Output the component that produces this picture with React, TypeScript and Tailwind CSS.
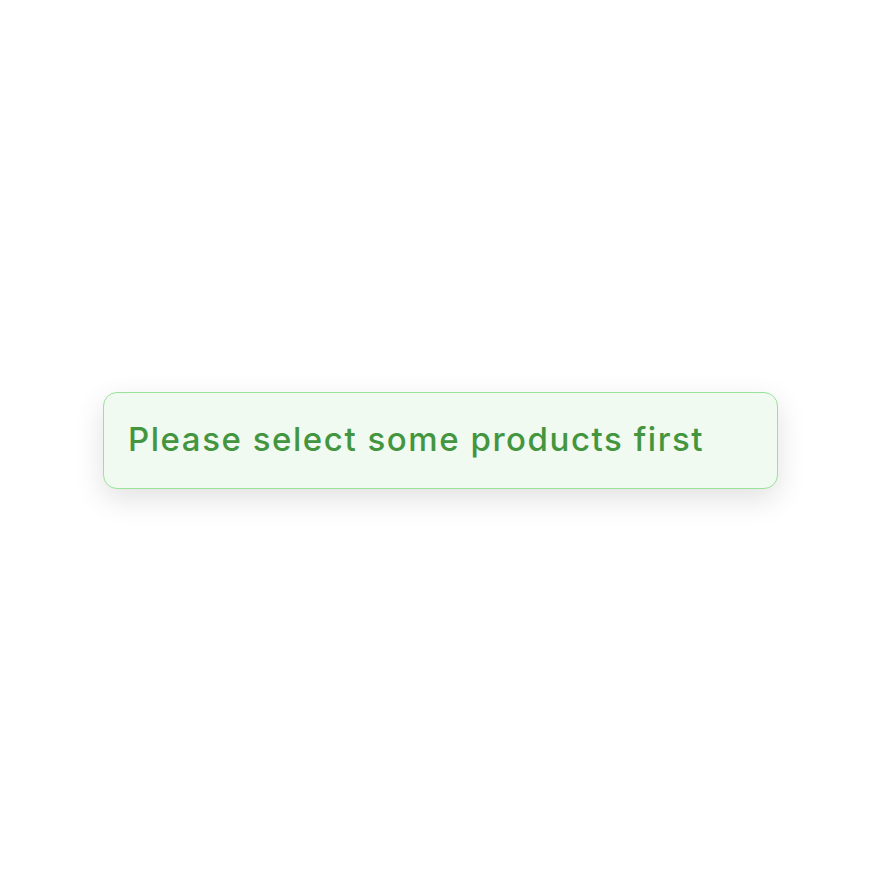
export default function App() {
  return (
    <div className="min-h-screen w-full bg-white flex items-center justify-center">
      <div className="w-[675px] h-[97px] -ml-[3px] -mt-[4px] flex items-center px-[24px] rounded-[14px] border-[1.5px] border-[#98e39a] bg-[#f0faf0] shadow-[0_10px_30px_rgba(0,0,0,0.12)]">
        <p className="text-[#43963f] text-[33px] font-medium tracking-[1.55px]" style={{ fontFamily: "Inter, 'Noto Sans', sans-serif" }}>
          Please select some products first
        </p>
      </div>
    </div>
  );
}
